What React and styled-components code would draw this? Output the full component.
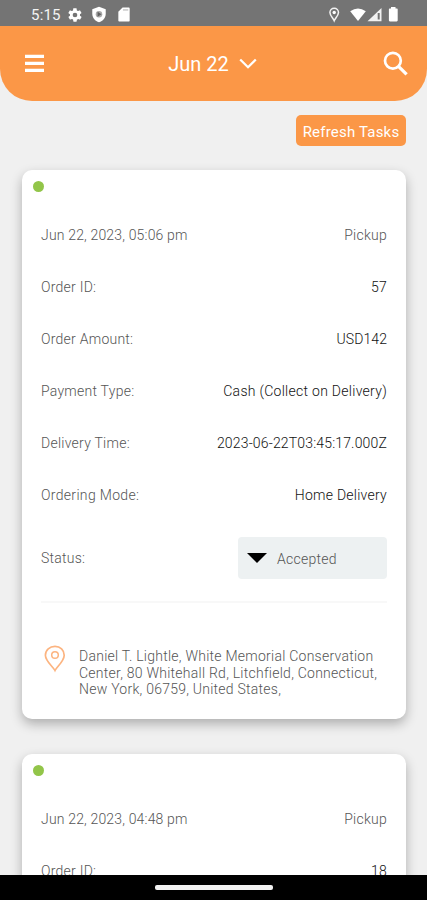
import React from "react";
import styled, { createGlobalStyle } from "styled-components";

const orders = [
  {
    id: "57",
    date: "Jun 22, 2023, 05:06 pm",
    type: "Pickup",
    amount: "USD142",
    payment: "Cash (Collect on Delivery)",
    time: "2023-06-22T03:45:17.000Z",
    mode: "Home Delivery",
    status: "Accepted",
    address: [
      "Daniel T. Lightle, White Memorial Conservation",
      "Center, 80 Whitehall Rd, Litchfield, Connecticut,",
      "New York, 06759, United States,",
    ],
  },
  {
    id: "18",
    date: "Jun 22, 2023, 04:48 pm",
    type: "Pickup",
  },
];

function OrderCard({ order }) {
  return (
    <Card>
      <Dot />
      <Row>
        <Label $tracking={0.17}>{order.date}</Label>
        <Label>{order.type}</Label>
      </Row>
      <Row>
        <Label>Order ID:</Label>
        <Value>{order.id}</Value>
      </Row>
      {order.amount && (
        <>
          <Row>
            <Label>Order Amount:</Label>
            <Value $tracking={0.1}>{order.amount}</Value>
          </Row>
          <Row>
            <Label>Payment Type:</Label>
            <Value $tracking={0.28}>{order.payment}</Value>
          </Row>
          <Row>
            <Label>Delivery Time:</Label>
            <Value $tracking={0.17}>{order.time}</Value>
          </Row>
          <Row>
            <Label $tracking={0.32}>Ordering Mode:</Label>
            <Value>{order.mode}</Value>
          </Row>
          <Row $height={74}>
            <Label>Status:</Label>
            <Select>
              <svg width="20" height="11" viewBox="0 0 20 11">
                <path d="M0 0H20L10 10Z" fill="#000" />
              </svg>
              <SelectText>{order.status}</SelectText>
            </Select>
          </Row>
          <Divider />
          <Address>
            <Pin width="22" height="28" viewBox="0 0 22 28" fill="none" stroke="#fcb480">
              <path
                d="M11 25.500C9.300 22 1.400 16.200 1.400 10.200C1.400 5 5.700 1.300 11 1.300C16.300 1.300 20.200 5 20.200 10.200C20.200 16.200 12.700 22 11 25.500Z"
                strokeWidth="1.700"
              />
              <circle cx="11" cy="10" r="3.300" strokeWidth="1.500" />
            </Pin>
            <div>
              {order.address.map((line) => (
                <AddressLine key={line}>{line}</AddressLine>
              ))}
            </div>
          </Address>
        </>
      )}
    </Card>
  );
}

export default function App() {
  return (
    <Screen>
      <GlobalStyle />
      <StatusBar>
        <StatusGroup>
          <Clock>5:15</Clock>
          <svg width="16" height="16" viewBox="0 0 24 24" fill="#fff">
            <path d="M19.400 13c0-.3.1-.6.1-1s0-.7-.1-1l2.100-1.600c.2-.1.3-.4.1-.6l-2-3.500c-.1-.2-.4-.3-.6-.2l-2.500 1c-.5-.4-1.100-.7-1.700-1l-.4-2.600c0-.3-.2-.5-.5-.5h-4c-.3 0-.5.2-.5.4L9 5.100c-.6.2-1.200.6-1.700 1l-2.500-1c-.2-.1-.5 0-.6.2l-2 3.500c-.1.2-.1.5.1.6L4.500 11c0 .3-.1.7-.1 1s0 .7.1 1l-2.100 1.600c-.2.100-.3.400-.1.600l2 3.500c.1.200.4.300.6.200l2.500-1c.5.400 1.100.700 1.700 1l.4 2.600c0 .3.2.5.5.5h4c.3 0 .5-.2.5-.5l.4-2.600c.6-.2 1.200-.6 1.700-1l2.500 1c.2.100.5 0 .6-.2l2-3.500c.1-.2.1-.5-.1-.6L19.400 13zM12 15.500a3.500 3.500 0 1 1 0-7 3.500 3.500 0 0 1 0 7z" />
          </svg>
          <svg width="18" height="17" viewBox="0 0 24 24">
            <path d="M12 1L2.500 4.500V11c0 5.600 4 10.500 9.500 12 5.500-1.500 9.500-6.400 9.500-12V4.500L12 1z" fill="#fff" />
            <circle cx="12" cy="11.500" r="4.600" fill="#aaa" />
            <path d="M10 8v7l5.500-3.500z" fill="#606060" />
          </svg>
          <svg width="18" height="17" viewBox="0 0 24 24" fill="#fff">
            <path d="M18.500 2H10L4 8v12.500c0 1 .8 1.500 1.700 1.500h12.800c1 0 1.500-.7 1.500-1.500v-17c0-.9-.6-1.500-1.500-1.500z" />
            <path d="M10.500 4.200h7.500v2.600h-7.500z" fill="#d2d2d2" />
          </svg>
        </StatusGroup>
        <StatusIcons width="70" height="16" viewBox="0 0 70 16" fill="#fff">
          <path
            d="M5.200 13.700C4.300 11.500 0.900 8.500 0.900 5.500a4.300 4.300 0 0 1 8.600 0C9.500 8.500 6.100 11.500 5.200 13.700Z"
            fill="none"
            stroke="#f2f2f2"
            strokeWidth="1.500"
          />
          <circle cx="5.200" cy="5.500" r="1.700" />
          <path d="M21.200 4.200Q29 -1 36.800 4.200L29 14Z" />
          <path d="M52.500 1V14.200H38.500Z" opacity="0.900" />
          <path d="M48.700 6H50.700V12.500H48.700Z" fill="#747474" />
          <path d="M62 0h4.500v1.500h1.200c.7 0 1 .4 1 1V13.200c0 .7-.4 1.200-1 1.200h-6.800c-.7 0-1-.5-1-1.200V2.500c0-.6.4-1 1-1h1.100Z" />
        </StatusIcons>
      </StatusBar>
      <Header>
        <svg width="19" height="19" viewBox="0 0 19 19" fill="#fff">
          <path d="M0 0.700h19v3.300H0zM0 7.700h19v3.300H0zM0 14.700h19V18H0z" />
        </svg>
        <DatePicker>
          Jun 22
          <svg width="18" height="11" viewBox="0 0 18 11" fill="none" stroke="#fff" strokeWidth="2.300">
            <path d="M1.200 1.500L9 9.200L16.800 1.500" />
          </svg>
        </DatePicker>
        <svg width="25" height="25" viewBox="0 0 25 25" fill="none" stroke="#fff">
          <circle cx="9.900" cy="9.700" r="7.900" strokeWidth="2.700" />
          <path d="M15.500 15.300L23.600 23.400" strokeWidth="3.200" />
        </svg>
      </Header>
      <Content>
        <RefreshButton>Refresh Tasks</RefreshButton>
        {orders.map((order) => (
          <OrderCard key={order.id} order={order} />
        ))}
      </Content>
      <NavBar>
        <NavHandle />
      </NavBar>
    </Screen>
  );
}

const GlobalStyle = createGlobalStyle`
  * {
    box-sizing: border-box;
  }
  body {
    margin: 0;
    font-family: Roboto, "Liberation Sans", sans-serif;
  }
`;

const Screen = styled.div`
  display: flex;
  flex-direction: column;
  width: 427px;
  height: 900px;
  overflow: hidden;
  background-color: #f0f0f0;
`;

const StatusBar = styled.div`
  display: flex;
  flex: none;
  align-items: center;
  justify-content: space-between;
  height: 26px;
  padding: 3px 28px 0 31px;
  background-color: #747474;
`;

const StatusGroup = styled.div`
  display: flex;
  align-items: center;
  gap: 7px;
`;

const Clock = styled.span`
  width: 29px;
  font-size: 15px;
  line-height: 16px;
  letter-spacing: 0.2px;
  color: #f4f4f4;
`;

const StatusIcons = styled.svg`
  flex: none;
`;

const Header = styled.header`
  display: flex;
  flex: none;
  align-items: center;
  justify-content: space-between;
  height: 75px;
  padding: 0 19px 0 25px;
  border-radius: 0 0 32px 32px;
  background-color: #fb9747;
`;

const DatePicker = styled.div`
  display: flex;
  align-items: center;
  gap: 10px;
  padding-right: 2px;
  font-size: 20px;
  color: #fff;
`;

const Content = styled.main`
  display: flex;
  flex: 1;
  flex-direction: column;
  min-height: 0;
  padding: 14px 21px 0 22px;
  overflow: hidden;
`;

const RefreshButton = styled.button`
  flex: none;
  align-self: flex-end;
  width: 110px;
  height: 31px;
  margin-bottom: 24px;
  padding: 3px 0 0;
  border: none;
  border-radius: 5px;
  background-color: #fb9747;
  font-family: inherit;
  font-size: 15px;
  letter-spacing: 0.2px;
  white-space: nowrap;
  color: #fff;
`;

const Card = styled.section`
  flex: none;
  width: 384px;
  margin-bottom: 35px;
  padding: 11px 19px 21px;
  border-radius: 10px;
  background-color: #fff;
  box-shadow: 0 5px 12px rgba(0, 0, 0, 0.28);
`;

const Dot = styled.div`
  width: 11px;
  height: 11px;
  margin: 0 0 17px -8px;
  border-radius: 50%;
  background-color: #92c549;
`;

const Row = styled.div`
  display: flex;
  align-items: center;
  justify-content: space-between;
  height: ${({ $height }) => $height || 52}px;
`;

const Label = styled.span`
  font-size: 14px;
  font-weight: 300;
  letter-spacing: ${({ $tracking }) => $tracking || 0.25}px;
  color: #555;
`;

const Value = styled(Label)`
  color: #111;
`;

const Select = styled.div`
  display: flex;
  align-items: center;
  gap: 10px;
  width: 149px;
  height: 42px;
  padding-left: 9px;
  border-radius: 4px;
  background-color: #edf1f2;
`;

const SelectText = styled(Label)`
  padding-top: 2px;
`;

const Divider = styled.div`
  height: 2px;
  margin-top: 6px;
  background-color: #f8f8f8;
`;

const Address = styled.div`
  display: flex;
  gap: 13px;
  margin-top: 42px;
  padding-left: 3px;
`;

const Pin = styled.svg`
  flex: none;
`;

const AddressLine = styled.div`
  font-size: 14px;
  font-weight: 300;
  line-height: 16.5px;
  letter-spacing: 0.25px;
  white-space: nowrap;
  color: #555;

  &:first-child {
    margin-top: 3px;
  }
`;

const NavBar = styled.nav`
  z-index: 1;
  display: flex;
  flex: none;
  justify-content: center;
  height: 25px;
  padding-top: 10px;
  background-color: #000;
`;

const NavHandle = styled.div`
  width: 118px;
  height: 5px;
  border-radius: 2px;
  background-color: #f2f2f2;
`;
